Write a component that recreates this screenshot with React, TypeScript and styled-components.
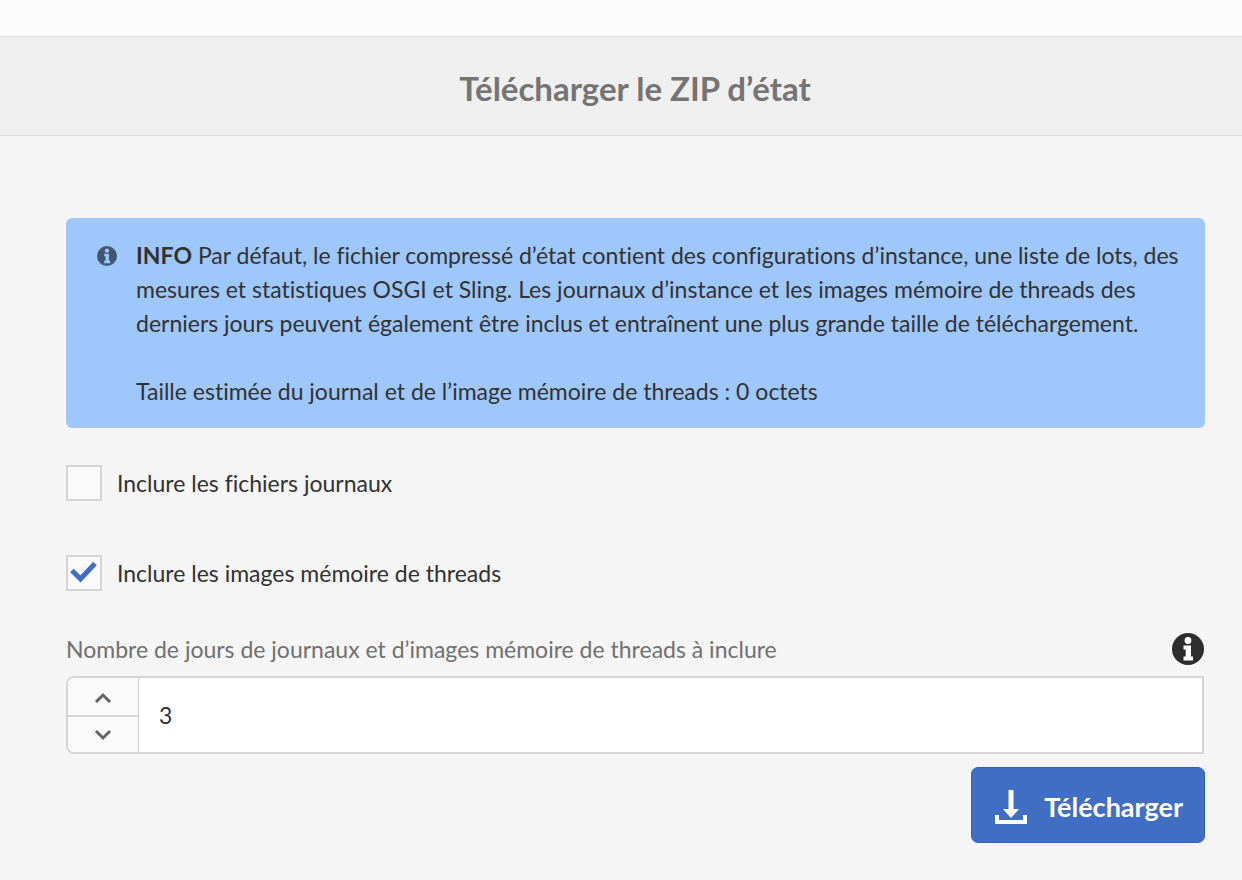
import React, { useState } from "react";
import styled, { createGlobalStyle } from "styled-components";

const GlobalStyle = createGlobalStyle`
  *, *::before, *::after { box-sizing: border-box; }
  body {
    margin: 0;
    background: #f5f5f5;
    color: #323232;
    font-family: Lato, "Open Sans", sans-serif;
    font-size: 23px;
    line-height: 34px;
    font-variant-ligatures: none;
  }
  button, input { font: inherit; color: inherit; margin: 0; }
`;

const Page = styled.div`
  min-height: 100vh;
`;

const TopStrip = styled.div`
  height: 36px;
  background: #fcfcfc;
`;

const Header = styled.header`
  padding: 31px 38px 27px 66px;
  background: #efefef;
  border-top: 1px solid #dcdcdc;
  border-bottom: 1px solid #dcdcdc;
`;

const Title = styled.h1`
  margin: 0;
  text-align: center;
  font-size: 33px;
  line-height: 40px;
  font-weight: 700;
  color: #747474;
`;

const Content = styled.main`
  padding: 82px 37px 37px 66px;
`;

const Alert = styled.section`
  display: flex;
  gap: 19px;
  padding: 20px 16px 20px 31px;
  border-radius: 6px;
  background: #9ec7fb;
`;

const AlertIcon = styled.span`
  display: flex;
  align-items: center;
  height: 36px;
`;

const AlertText = styled.p`
  margin: 0;

  & + & {
    margin-top: 34px;
  }
`;

const Checks = styled.div`
  display: grid;
  gap: 54px;
  margin-top: 37px;
`;

const CheckLabel = styled.label`
  display: flex;
  align-items: center;
  gap: 15px;
  height: 36px;
`;

const CheckFrame = styled.span`
  display: grid;
  width: 36px;
  height: 36px;

  & > * {
    grid-area: 1 / 1;
  }

  svg {
    pointer-events: none;
    visibility: hidden;
  }

  input:checked + svg {
    visibility: visible;
  }
`;

const CheckInput = styled.input`
  appearance: none;
  width: 36px;
  height: 36px;
  border: 2px solid #d5d5d5;
  background: #fafafa;
`;

const FieldHead = styled.div`
  display: flex;
  justify-content: space-between;
  align-items: center;
  margin-top: 41px;
  color: #707070;
`;

const InfoButton = styled.button`
  display: flex;
  padding: 0;
  margin-right: 1px;
  border: 0;
  background: none;
`;

const NumberField = styled.div`
  display: flex;
  height: 78px;
  margin: 10px 1px 0 0;
  border: 2px solid #d5d5d5;
  border-radius: 8px 0 0 8px;
  background: #fff;
  overflow: hidden;
`;

const Steps = styled.div`
  display: grid;
  grid-template-rows: 1fr 1fr;
  width: 71px;
  border-right: 1px solid #cfcfcf;
`;

const StepButton = styled.button`
  display: flex;
  align-items: center;
  justify-content: center;
  padding: 0;
  border: 0;
  background: #fafafa;

  & + & {
    border-top: 2px solid #d5d5d5;
  }
`;

const NumberInput = styled.input`
  flex: 1;
  min-width: 0;
  padding: 0 20px;
  border: 0;
  outline: 0;
  background: transparent;
`;

const Actions = styled.div`
  display: flex;
  justify-content: flex-end;
  margin-top: 13px;
`;

const DownloadButton = styled.button`
  display: flex;
  align-items: center;
  gap: 16px;
  height: 76px;
  padding: 4px 21px 0 22px;
  border: 1px solid #2f62bd;
  border-radius: 7px;
  background: #3f6ec3;
  color: #fff;
  font-size: 27px;
  font-weight: 700;
`;

function InfoGlyph({ size, color, hole }: { size: number; color: string; hole: string }) {
  return (
    <svg width={size} height={size} viewBox="0 0 32 32" aria-hidden="true">
      <circle cx="16" cy="16" r="16" fill={color} />
      <circle cx="16" cy="7.5" r="3.4" fill={hole} />
      <path d="M11.500 12.500h7.500v11h2V27.500h-9.500v-4h2.200v-7h-2.200z" fill={hole} />
    </svg>
  );
}

function Chevron({ up }: { up?: boolean }) {
  return (
    <svg width="18" height="12" viewBox="0 0 18 12" fill="none" stroke="#666" strokeWidth="3" aria-hidden="true">
      <path d={up ? "M2 11l7-7 7 7" : "M2 2l7 7 7-7"} />
    </svg>
  );
}

function CheckRow({ label, initial }: { label: string; initial: boolean }) {
  const [checked, setChecked] = useState(initial);
  return (
    <CheckLabel>
      <CheckFrame>
        <CheckInput type="checkbox" checked={checked} onChange={() => setChecked(!checked)} />
        <svg width="36" height="36" viewBox="0 0 36 36" aria-hidden="true">
          <path d="M6 15.500l8.500 8.500L29 8.500" fill="none" stroke="#3f6ec3" strokeWidth="5" />
        </svg>
      </CheckFrame>
      {label}
    </CheckLabel>
  );
}

export default function App() {
  const [days, setDays] = useState(3);
  return (
    <Page>
      <GlobalStyle />
      <TopStrip />
      <Header>
        <Title>Télécharger le ZIP d’état</Title>
      </Header>
      <Content>
        <Alert>
          <AlertIcon>
            <InfoGlyph size={20} color="#41566f" hole="#9ec7fb" />
          </AlertIcon>
          <div>
            <AlertText>
              <strong>INFO</strong> Par défaut, le fichier compressé d’état contient des configurations d’instance, une
              liste de lots, des mesures et statistiques OSGI et Sling. Les journaux d’instance et les images mémoire de
              threads des derniers jours peuvent également être inclus et entraînent une plus grande taille de
              téléchargement.
            </AlertText>
            <AlertText>Taille estimée du journal et de l’image mémoire de threads : 0 octets</AlertText>
          </div>
        </Alert>
        <Checks>
          <CheckRow label="Inclure les fichiers journaux" initial={false} />
          <CheckRow label="Inclure les images mémoire de threads" initial />
        </Checks>
        <FieldHead>
          <label htmlFor="days">Nombre de jours de journaux et d’images mémoire de threads à inclure</label>
          <InfoButton type="button" aria-label="Informations">
            <InfoGlyph size={32} color="#2d2d2d" hole="#fff" />
          </InfoButton>
        </FieldHead>
        <NumberField>
          <Steps>
            <StepButton type="button" aria-label="Augmenter" onClick={() => setDays(days + 1)}>
              <Chevron up />
            </StepButton>
            <StepButton type="button" aria-label="Diminuer" onClick={() => setDays(Math.max(0, days - 1))}>
              <Chevron />
            </StepButton>
          </Steps>
          <NumberInput
            id="days"
            inputMode="numeric"
            value={days}
            onChange={(e) => setDays(Number(e.target.value) || 0)}
          />
        </NumberField>
        <Actions>
          <DownloadButton type="button">
            <svg width="34" height="34" viewBox="0 0 34 34" fill="#fff" aria-hidden="true">
              <path d="M14.500 0h5v19h5.500l-8 9-8-9h5.500z" />
              <path d="M1 25h4v5h24v-5h4v9H1z" />
            </svg>
            Télécharger
          </DownloadButton>
        </Actions>
      </Content>
    </Page>
  );
}
